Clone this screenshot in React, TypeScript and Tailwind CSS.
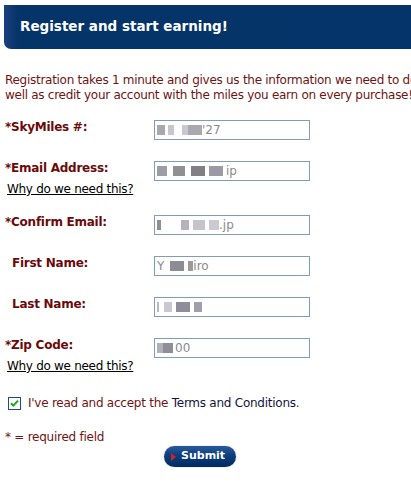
import React from "react";

const font = { fontFamily: '"DejaVu Sans", Verdana, sans-serif' };

function Blur({ w, c = "#b8b8c0" }: { w: number; c?: string }) {
  return <span className="inline-block h-[10px] align-middle" style={{ width: w, background: c }} />;
}

function Field({ children }: { children?: React.ReactNode }) {
  return (
    <div className="w-[156px] h-[20px] border border-[#7f9db9] bg-white flex items-center pl-[2px] text-[12px] text-[#8a8a8a] leading-none overflow-hidden whitespace-nowrap">
      {children}
    </div>
  );
}

function Label({ text, req = true }: { text: string; req?: boolean }) {
  return (
    <div className={`font-bold text-[12px] leading-[15px] tracking-[-0.25px] text-[#6b0a0a] ${req ? "" : "pl-[7px]"}`}>
      {req ? "*" : ""}
      {text}
    </div>
  );
}

function Why() {
  return <div className="text-[12px] leading-[15px] tracking-[-0.3px] text-black underline pl-[2px] mt-[6px]">Why do we need this?</div>;
}

export default function App() {
  return (
    <div className="w-[411px] h-[485px] overflow-hidden bg-white relative" style={font}>
      <div className="w-[600px]">
        <div className="mt-[5px] ml-[4px] h-[44px] rounded-bl-[7px] bg-[linear-gradient(to_right,#1b3f7e_0px,#053468_14px,#04346a_100%)] flex items-center pl-[16px] pb-[1px]">
          <span className="text-white font-bold text-[13.5px]">Register and start earning!</span>
        </div>
        <p className="mt-[24px] ml-[5px] text-[12px] leading-[15px] tracking-[-0.28px] text-[#6f1414] whitespace-nowrap">
          Registration takes 1 minute and gives us the information we need to de
          <br />
          well as credit your account with the miles you earn on every purchase!
        </p>
        <div className="mt-[17px] ml-[5px] flex flex-col">
          <div className="flex items-start h-[41px]">
            <div className="w-[149px] mt-[0px]"><Label text="SkyMiles #:" /></div>
            <Field><Blur w={8} c="#a8a8b0" /><span className="w-[3px]" /><Blur w={6} c="#c6c6cc" /><span className="w-[8px]" /><Blur w={6} c="#c8c8ce" /><Blur w={14} c="#a9a9b0" /><span>'27</span></Field>
          </div>
          <div className="flex items-start h-[54px]">
            <div className="w-[149px] mt-[0px]"><Label text="Email Address:" /><Why /></div>
            <Field><Blur w={10} c="#9d9da6" /><span className="w-[6px]" /><Blur w={12} c="#8f9094" /><span className="w-[6px]" /><Blur w={14} c="#7f8086" /><span className="w-[4px]" /><Blur w={14} c="#9a9aa4" /><span className="ml-[3px]">ip</span></Field>
          </div>
          <div className="flex items-start h-[41px]">
            <div className="w-[149px] mt-[0px]"><Label text="Confirm Email:" /></div>
            <Field><Blur w={4} c="#8e8e96" /><span className="w-[20px]" /><Blur w={8} c="#b3b3bb" /><span className="w-[4px]" /><Blur w={12} c="#c4c4ca" /><span className="w-[4px]" /><Blur w={10} c="#cacad0" /><span>.jp</span></Field>
          </div>
          <div className="flex items-start h-[41px]">
            <div className="w-[149px] mt-[0px]"><Label text="First Name:" req={false} /></div>
            <Field><span>Y</span><span className="w-[6px]" /><Blur w={14} c="#8c8c94" /><span className="w-[4px]" /><Blur w={5} c="#a09898" /><span>iro</span></Field>
          </div>
          <div className="flex items-start h-[41px]">
            <div className="w-[149px] mt-[0px]"><Label text="Last Name:" req={false} /></div>
            <Field><Blur w={2} c="#b8b8c0" /><span className="w-[5px]" /><Blur w={8} c="#c8c8d0" /><span className="w-[4px]" /><Blur w={14} c="#8e8e98" /><span className="w-[4px]" /><Blur w={8} c="#a0a0aa" /></Field>
          </div>
          <div className="flex items-start h-[58px]">
            <div className="w-[149px] mt-[0px]"><Label text="Zip Code:" /><Why /></div>
            <Field><Blur w={6} c="#b0b0b8" /><Blur w={10} c="#8e8e96" /><span className="ml-[2px]">00</span></Field>
          </div>
          <label className="flex items-center ml-[3px] h-[14px]">
            <svg width="13" height="13" viewBox="0 0 13 13" className="shrink-0">
              <rect x="0.5" y="0.5" width="12" height="12" fill="#ffffff" stroke="#1c4f7a" />
              <path d="M3 6.2 L5.3 8.6 L10 3.6" fill="none" stroke="#21a121" strokeWidth="2" />
            </svg>
            <span className="ml-[7px] text-[12px] tracking-[-0.25px] text-[#6f1414] whitespace-nowrap">
              I've read and accept the <span className="text-[#14143c]">Terms and Conditions</span>.
            </span>
          </label>
          <div className="mt-[20px] text-[12px] leading-[15px] tracking-[-0.25px] text-[#6f1414]">* = required field</div>
          <div className="ml-[159px] mt-[1px] w-[72px] h-[21px] rounded-full bg-[linear-gradient(to_bottom,#2a5a9a_0%,#0c3e7e_45%,#002a60_100%)] flex items-center shadow-[0_0_1px_#667]">
            <span className="ml-[7px] w-0 h-0 border-y-[4px] border-y-transparent border-l-[5px] border-l-[#d0202a]" />
            <span className="ml-[5px] text-white font-bold text-[11px]">Submit</span>
          </div>
        </div>
      </div>
    </div>
  );
}
